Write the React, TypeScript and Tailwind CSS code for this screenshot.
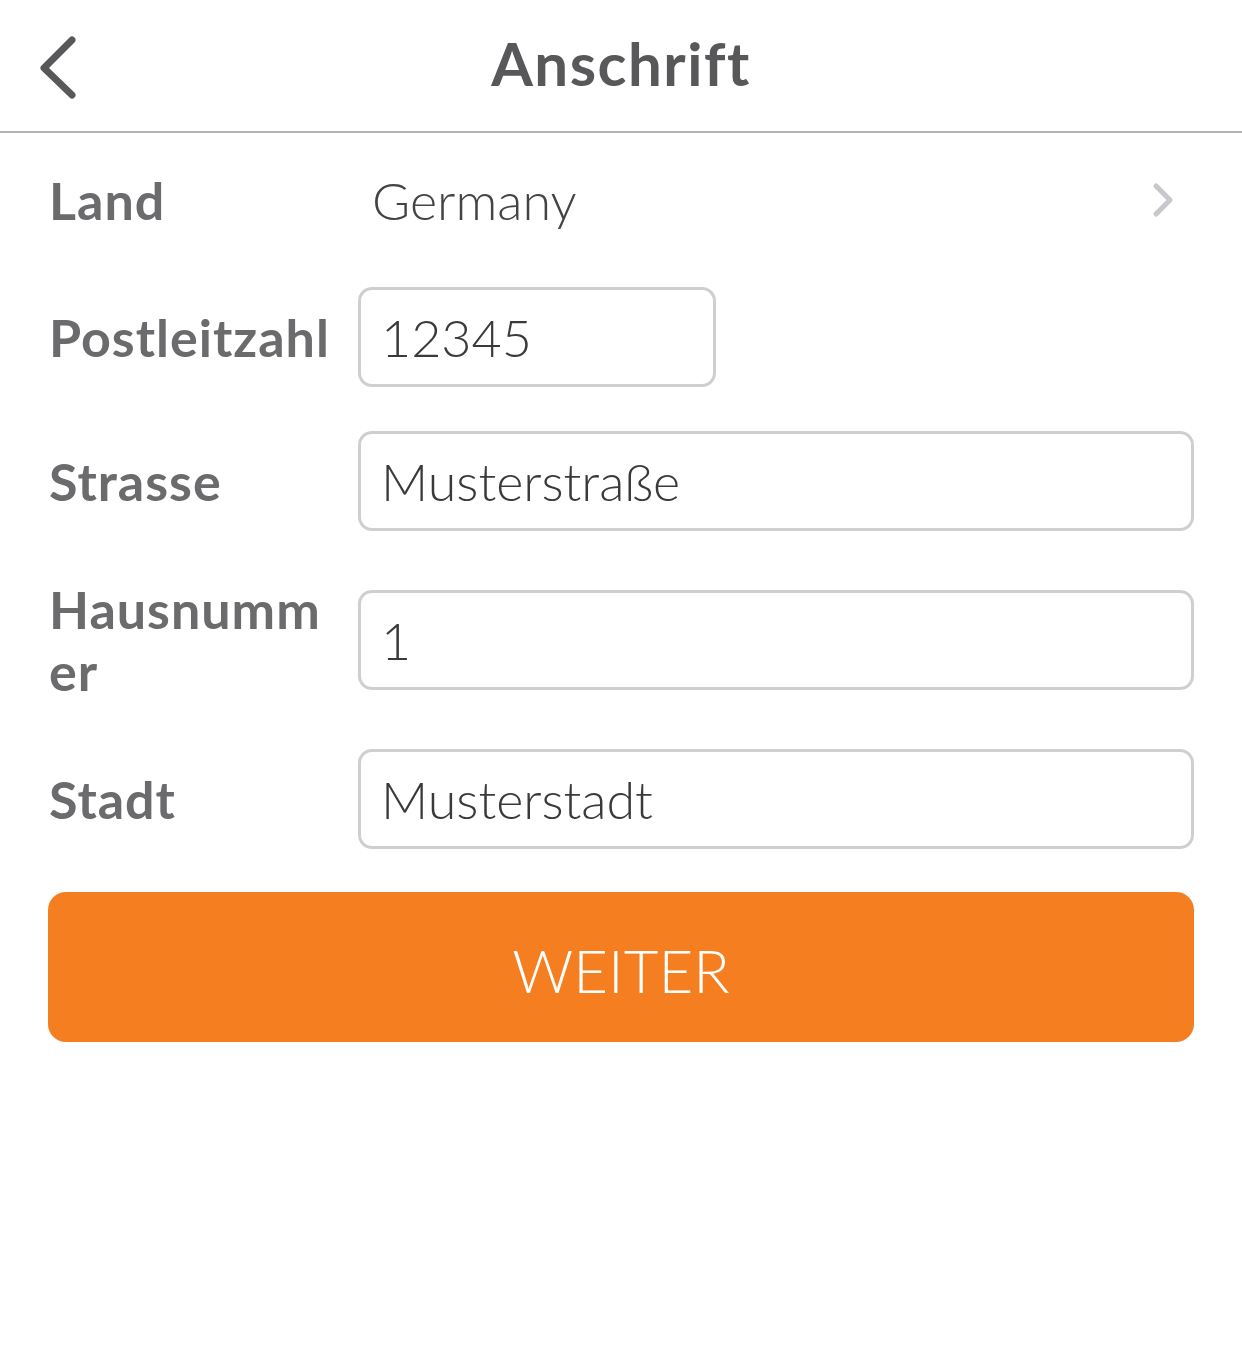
import React from "react";

const font = { fontFamily: "Lato, 'Noto Sans', sans-serif" };

function Field({ value }: { value: string }) {
  return (
    <div className="flex h-[100px] flex-1 items-center rounded-[14px] border-[3px] border-[#cfcfcf] bg-white pl-[20px] text-[52px] font-light text-[#3a3a3a]">
      {value}
    </div>
  );
}

function Label({ children }: { children: React.ReactNode }) {
  return (
    <div className="w-[310px] pl-[1px] text-[52px] font-bold leading-[62px] tracking-[1px] text-[#6b6b6e]">
      {children}
    </div>
  );
}

export default function App() {
  return (
    <div className="min-h-[1350px] w-[1242px] bg-white" style={font}>
      <header className="relative flex h-[133px] items-center justify-center border-b-2 border-[#b5b5b5] pb-[6px]">
        <button className="absolute left-[36px] top-[34px]">
          <svg width="44" height="66" viewBox="0 0 44 66" fill="none">
            <path d="M36 6 L8 34 L36 61" stroke="#58585b" strokeWidth="7" strokeLinecap="round" strokeLinejoin="round" />
          </svg>
        </button>
        <h1 className="text-[60px] font-bold tracking-[1.5px] text-[#58585b]">Anschrift</h1>
      </header>
      <main className="px-[48px]">
        <div className="flex h-[134px] items-center">
          <Label>Land</Label>
          <div className="flex-1 pl-[14px] text-[52px] font-light text-[#444]">Germany</div>
          <svg width="28" height="40" viewBox="0 0 28 40" fill="none" className="mr-[16px]">
            <path d="M6 6 L20 20 L6 34" stroke="#c7c7cc" strokeWidth="5" strokeLinecap="round" strokeLinejoin="round" />
          </svg>
        </div>
        <div className="mt-[20px] flex items-center">
          <Label>Postleitzahl</Label>
          <div className="w-[358px]">
            <Field value="12345" />
          </div>
        </div>
        <div className="mt-[44px] flex items-center">
          <Label>Strasse</Label>
          <Field value="Musterstraße" />
        </div>
        <div className="mt-[47px] flex items-center">
          <Label>
            Hausnumm<br />er
          </Label>
          <Field value="1" />
        </div>
        <div className="mt-[47px] flex items-center">
          <Label>Stadt</Label>
          <Field value="Musterstadt" />
        </div>
        <button className="mt-[43px] flex h-[150px] w-full items-center justify-center rounded-[18px] bg-[#f57f20] pt-[6px] text-[60px] font-light text-white">
          WEITER
        </button>
      </main>
    </div>
  );
}
